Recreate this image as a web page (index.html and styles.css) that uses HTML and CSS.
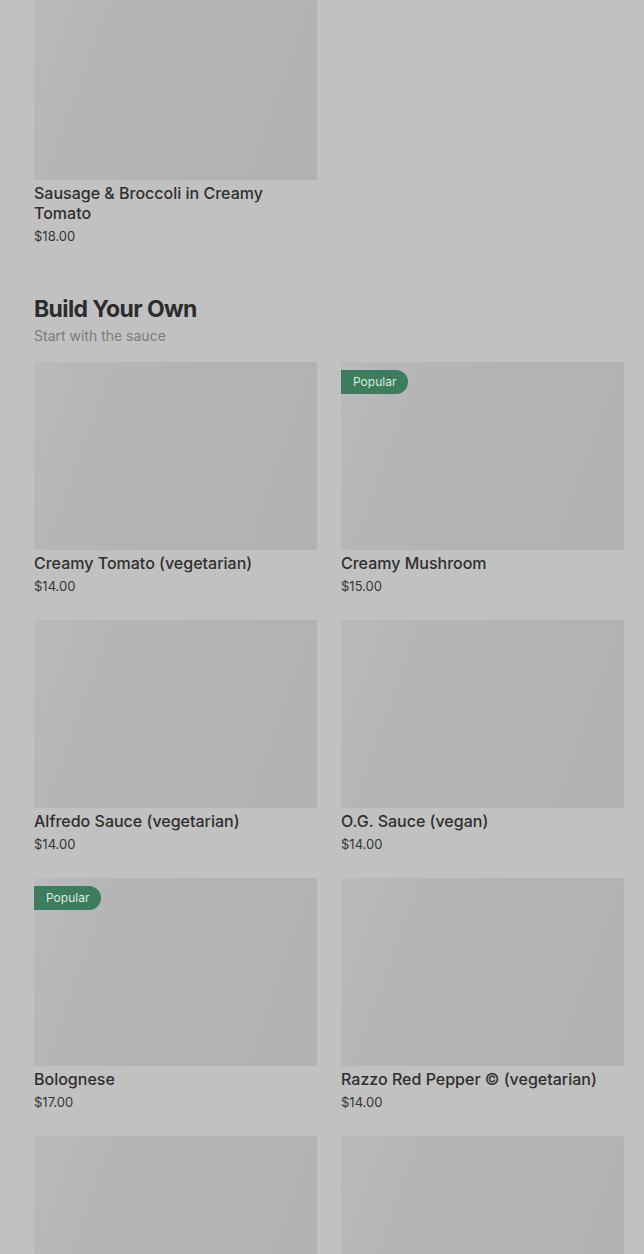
FILE: index.html
```html
<!DOCTYPE html>
<html lang="en">

<head>
    <meta charset="UTF-8">
    <meta name="viewport" content="width=device-width, initial-scale=1.0">
    <title>Menu</title>
    <link rel="stylesheet" href="styles.css">
</head>

<body>
    <div class="menu">
        <section class="menu-section first">
            <div class="item-grid">
                <div class="item-card">
                    <div class="item-image"></div>
                    <p class="item-name">Sausage &amp; Broccoli in Creamy Tomato</p>
                    <p class="item-price">$18.00</p>
                </div>
            </div>
        </section>

        <section class="menu-section">
            <h2 class="section-title">Build Your Own</h2>
            <p class="section-subtitle">Start with the sauce</p>
            <div class="item-grid">
                <div class="item-card">
                    <div class="item-image"></div>
                    <p class="item-name">Creamy Tomato (vegetarian)</p>
                    <p class="item-price">$14.00</p>
                </div>
                <div class="item-card">
                    <div class="item-image"><span class="badge">Popular</span></div>
                    <p class="item-name">Creamy Mushroom</p>
                    <p class="item-price">$15.00</p>
                </div>
                <div class="item-card">
                    <div class="item-image"></div>
                    <p class="item-name">Alfredo Sauce (vegetarian)</p>
                    <p class="item-price">$14.00</p>
                </div>
                <div class="item-card">
                    <div class="item-image"></div>
                    <p class="item-name">O.G. Sauce (vegan)</p>
                    <p class="item-price">$14.00</p>
                </div>
                <div class="item-card">
                    <div class="item-image"><span class="badge">Popular</span></div>
                    <p class="item-name">Bolognese</p>
                    <p class="item-price">$17.00</p>
                </div>
                <div class="item-card">
                    <div class="item-image"></div>
                    <p class="item-name">Razzo Red Pepper © (vegetarian)</p>
                    <p class="item-price">$14.00</p>
                </div>
                <div class="item-card">
                    <div class="item-image"></div>
                </div>
                <div class="item-card">
                    <div class="item-image"></div>
                </div>
            </div>
        </section>
    </div>
</body>

</html>
```

FILE: styles.css
```css
body {
    margin: 0;
    background-color: #c1c1c1;
    font-family: Inter, "Noto Sans", sans-serif;
    color: #2f2f2f;
    overflow: hidden;
}

.menu {
    padding: 0 20px 0 34px;
}

.menu-section.first {
    margin-top: -8px;
    margin-bottom: 49px;
}

.section-title {
    margin: 0;
    font-size: 23px;
    line-height: 28px;
    font-weight: 700;
    letter-spacing: -0.6px;
    color: #2c2c2c;
}

.section-subtitle {
    margin: 3px 0 16px;
    font-size: 14px;
    line-height: 20px;
    color: #7b7b7b;
}

.item-grid {
    display: grid;
    grid-template-columns: 1fr 1fr;
    column-gap: 24px;
    row-gap: 24px;
}

.item-image {
    position: relative;
    height: 188px;
    background: linear-gradient(110deg, #bababa 0%, #b5b5b5 25%, #b3b3b3 60%, #b2b2b2 100%);
    margin-bottom: 3px;
}

.badge {
    position: absolute;
    top: 8px;
    left: 0;
    height: 24px;
    line-height: 24px;
    padding: 0 12px;
    border-radius: 0 12px 12px 0;
    background-color: #3b7d5c;
    color: #dfe9e3;
    font-size: 12px;
}

.item-name {
    margin: 0 0 3px;
    font-size: 16px;
    line-height: 20px;
    font-weight: 500;
    color: #2f2f2f;
}

.item-price {
    margin: 0;
    font-size: 13px;
    line-height: 20px;
    color: #363636;
}
```
